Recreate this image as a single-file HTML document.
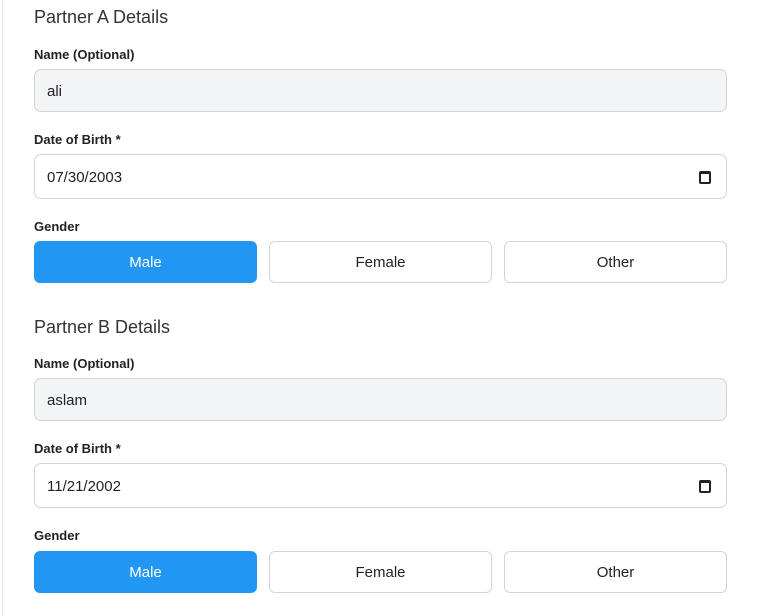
<!DOCTYPE html>
<html><head><style>
*{box-sizing:border-box;margin:0;padding:0}
body{width:759px;height:616px;background:#fff;font-family:"Liberation Sans","DejaVu Sans",sans-serif;color:#222;position:relative;overflow:hidden}
.bl{position:absolute;left:2px;top:0;width:1px;height:616px;background:#e3e3e3}
h2{position:absolute;left:34px;font-size:18px;font-weight:400;color:#333}
.lbl{position:absolute;left:34px;font-size:13px;font-weight:700;color:#222}
.in{position:absolute;left:34px;width:693px;border:1px solid #d4d4d4;border-radius:7px;font-size:15px;padding-left:12px;padding-top:2px;display:flex;align-items:center}
.g{background:#f3f4f6;height:43px}
.d{background:#fff;height:45px}
.cal{position:absolute;right:15px;top:16px;width:12px;height:13px;border:2px solid #222;border-top-width:3px;border-radius:2px}
.btn{position:absolute;width:223px;height:42px;border:1px solid #d4d4d4;border-radius:6px;font-size:15px;display:flex;align-items:center;justify-content:center;background:#fff;color:#222}
.on{background:#2196f3;border-color:#2196f3;color:#fff}
</style></head><body>
<div class="bl"></div>

<h2 style="top:7px">Partner A Details</h2>
<div class="lbl" style="top:47px">Name (Optional)</div>
<div class="in g" style="top:69px">ali</div>
<div class="lbl" style="top:132px">Date of Birth *</div>
<div class="in d" style="top:154px">07/30/2003<span class="cal"></span></div>
<div class="lbl" style="top:219px">Gender</div>
<div class="btn on" style="left:34px;top:241px">Male</div>
<div class="btn" style="left:269px;top:241px">Female</div>
<div class="btn" style="left:504px;top:241px">Other</div>

<h2 style="top:317px">Partner B Details</h2>
<div class="lbl" style="top:356px">Name (Optional)</div>
<div class="in g" style="top:378px">aslam</div>
<div class="lbl" style="top:441px">Date of Birth *</div>
<div class="in d" style="top:463px">11/21/2002<span class="cal"></span></div>
<div class="lbl" style="top:528px">Gender</div>
<div class="btn on" style="left:34px;top:551px">Male</div>
<div class="btn" style="left:269px;top:551px">Female</div>
<div class="btn" style="left:504px;top:551px">Other</div>
</body></html>
